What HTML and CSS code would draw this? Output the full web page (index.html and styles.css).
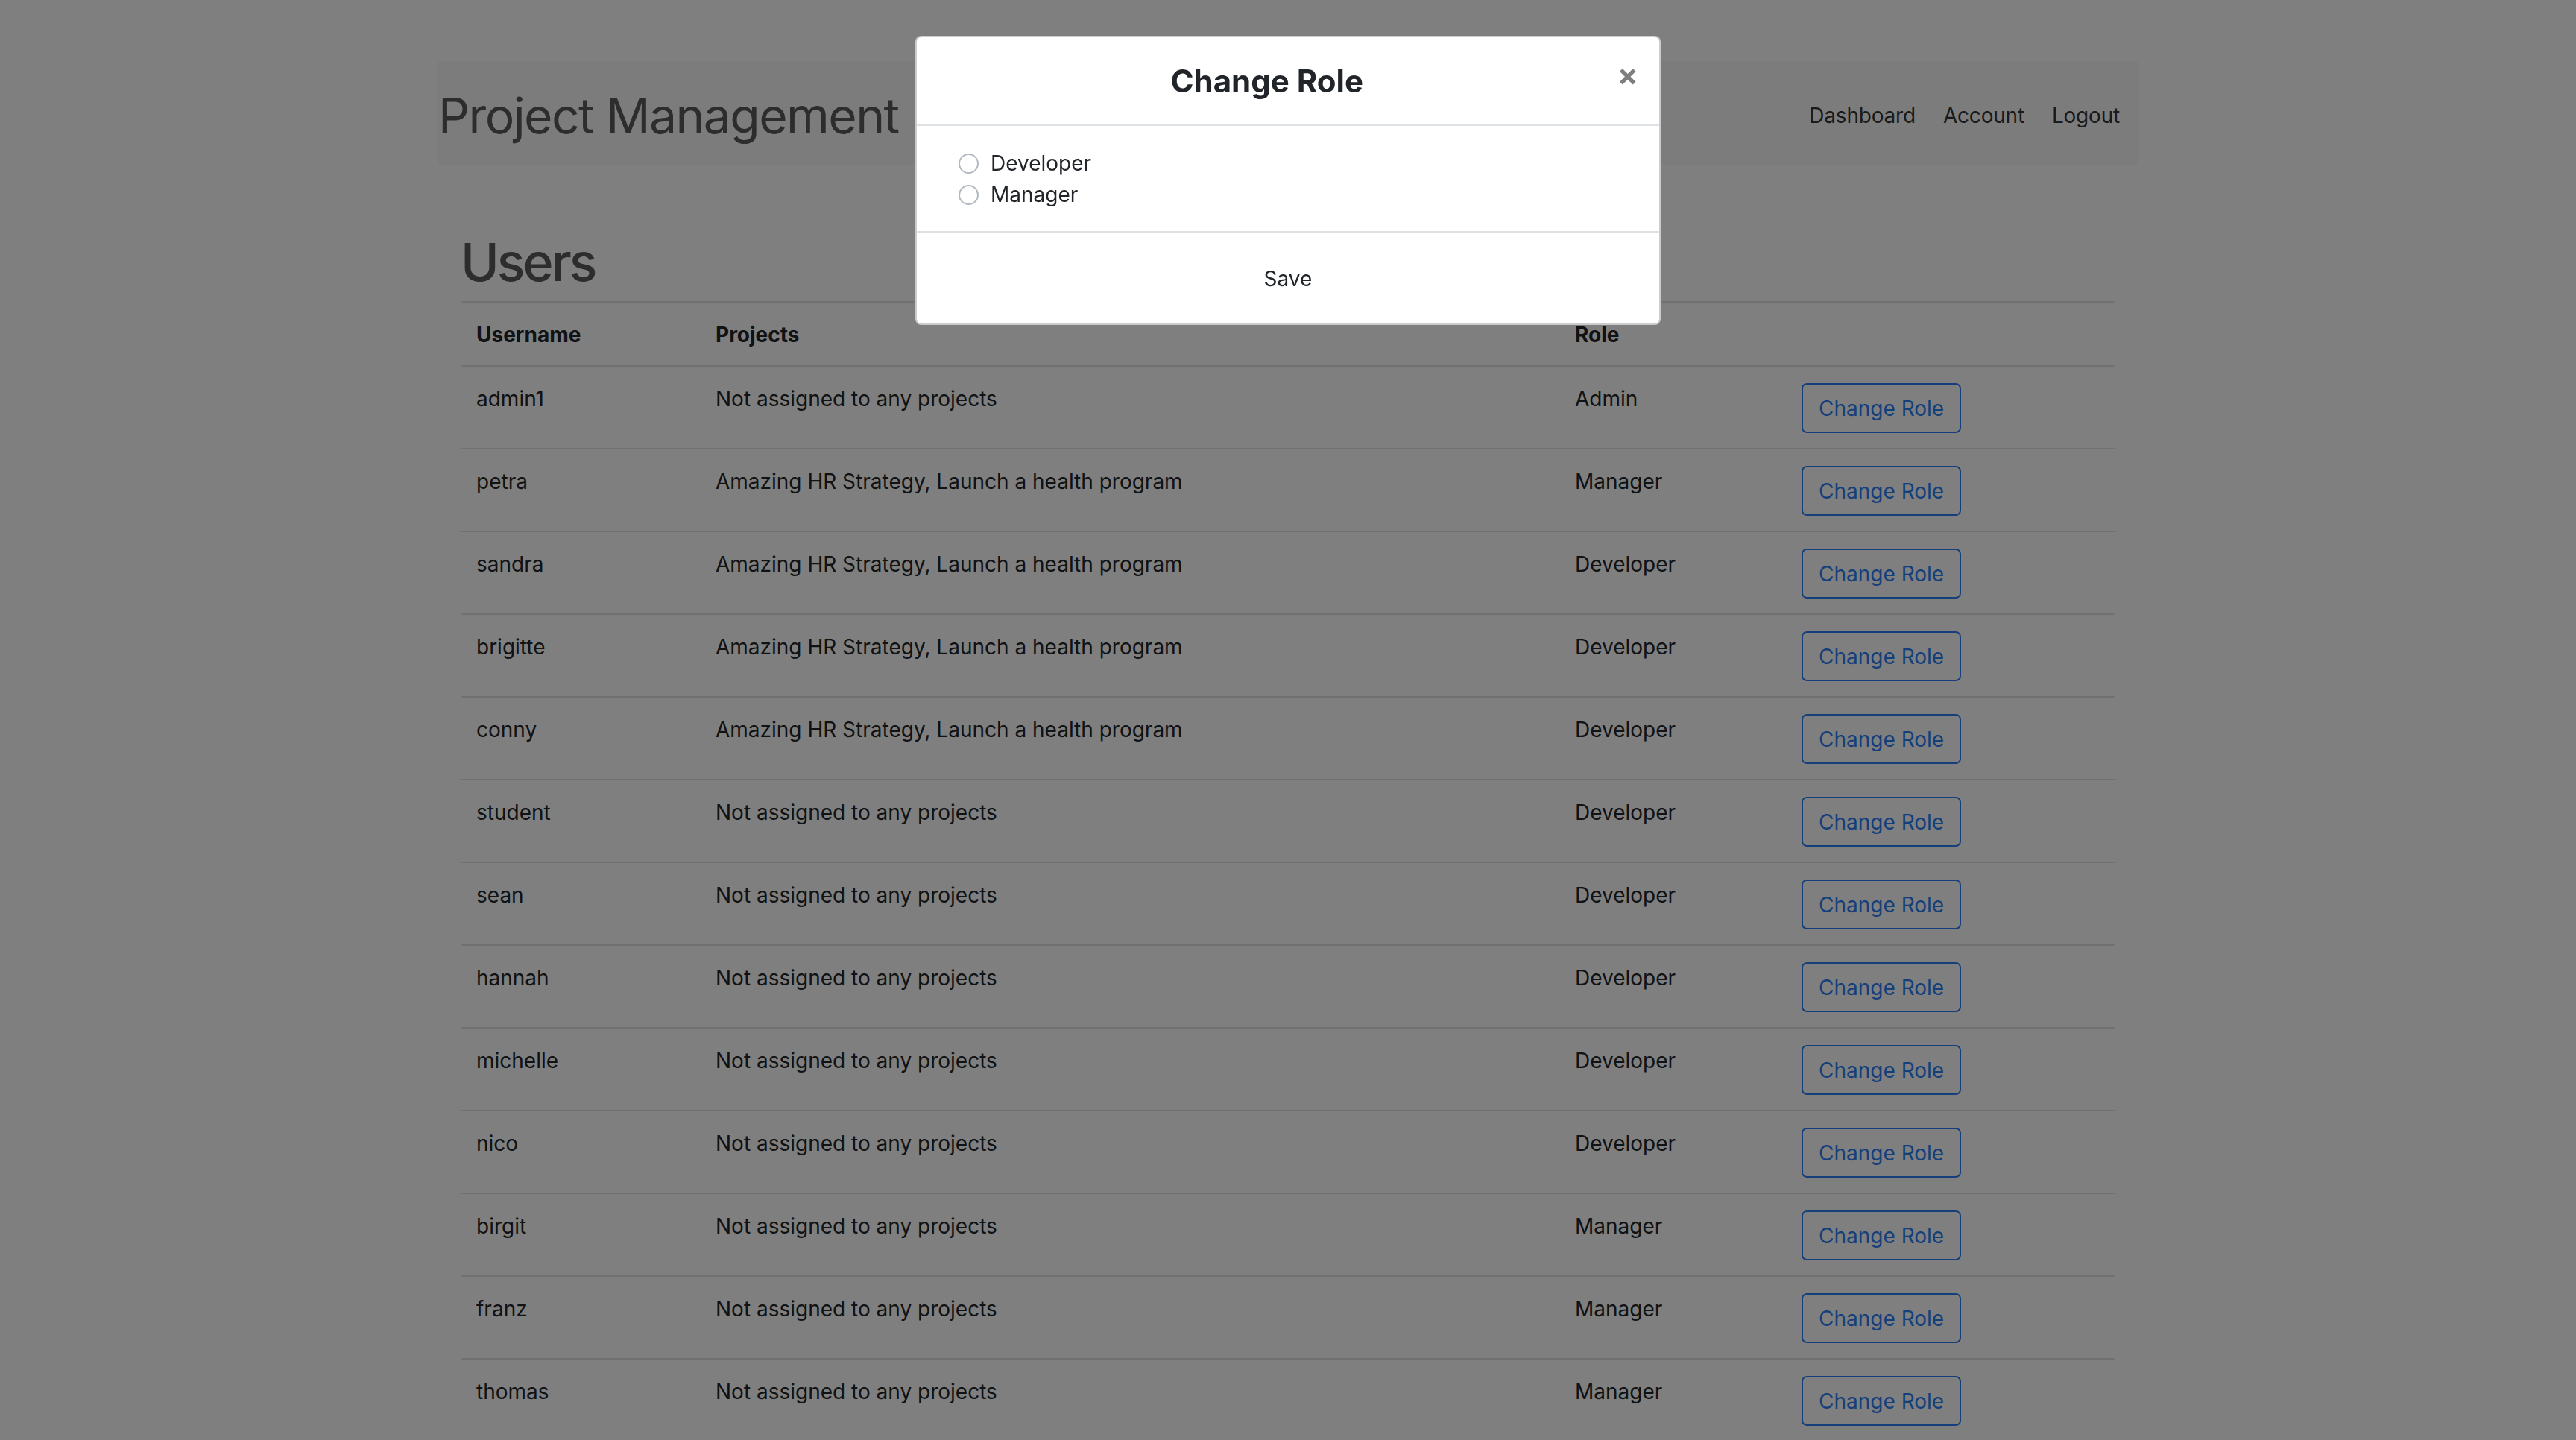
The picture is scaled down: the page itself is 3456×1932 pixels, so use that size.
FILE: index.html
```html
<!DOCTYPE html>
<html lang="en">
<head>
<meta charset="utf-8">
<title>Project Management - Users</title>
<link rel="stylesheet" href="styles.css">
</head>
<body>
<div class="page">
  <nav class="navbar">
    <a class="brand" href="#">Project Management</a>
    <ul class="nav">
      <li><a class="nav-link" href="#">Dashboard</a></li>
      <li><a class="nav-link" href="#">Account</a></li>
      <li><a class="nav-link" href="#">Logout</a></li>
    </ul>
  </nav>
  <main class="content">
    <h1 class="title">Users</h1>
    <table class="users">
      <colgroup>
        <col class="c-user"><col class="c-proj"><col class="c-role"><col class="c-act">
      </colgroup>
      <thead>
        <tr><th>Username</th><th>Projects</th><th>Role</th><th></th></tr>
      </thead>
      <tbody>
        <tr><td>admin1</td><td>Not assigned to any projects</td><td>Admin</td><td><button class="btn-outline">Change Role</button></td></tr>
        <tr><td>petra</td><td>Amazing HR Strategy, Launch a health program</td><td>Manager</td><td><button class="btn-outline">Change Role</button></td></tr>
        <tr><td>sandra</td><td>Amazing HR Strategy, Launch a health program</td><td>Developer</td><td><button class="btn-outline">Change Role</button></td></tr>
        <tr><td>brigitte</td><td>Amazing HR Strategy, Launch a health program</td><td>Developer</td><td><button class="btn-outline">Change Role</button></td></tr>
        <tr><td>conny</td><td>Amazing HR Strategy, Launch a health program</td><td>Developer</td><td><button class="btn-outline">Change Role</button></td></tr>
        <tr><td>student</td><td>Not assigned to any projects</td><td>Developer</td><td><button class="btn-outline">Change Role</button></td></tr>
        <tr><td>sean</td><td>Not assigned to any projects</td><td>Developer</td><td><button class="btn-outline">Change Role</button></td></tr>
        <tr><td>hannah</td><td>Not assigned to any projects</td><td>Developer</td><td><button class="btn-outline">Change Role</button></td></tr>
        <tr><td>michelle</td><td>Not assigned to any projects</td><td>Developer</td><td><button class="btn-outline">Change Role</button></td></tr>
        <tr><td>nico</td><td>Not assigned to any projects</td><td>Developer</td><td><button class="btn-outline">Change Role</button></td></tr>
        <tr><td>birgit</td><td>Not assigned to any projects</td><td>Manager</td><td><button class="btn-outline">Change Role</button></td></tr>
        <tr><td>franz</td><td>Not assigned to any projects</td><td>Manager</td><td><button class="btn-outline">Change Role</button></td></tr>
        <tr><td>thomas</td><td>Not assigned to any projects</td><td>Manager</td><td><button class="btn-outline">Change Role</button></td></tr>
      </tbody>
    </table>
  </main>
</div>

<div class="backdrop"></div>

<div class="modal">
  <div class="modal-dialog">
    <div class="modal-content">
      <div class="modal-header">
        <h4 class="modal-title">Change Role</h4>
        <button class="close" type="button">&times;</button>
      </div>
      <div class="modal-body">
        <label class="radio-row"><input class="radio" type="radio" name="role"><span>Developer</span></label>
        <label class="radio-row"><input class="radio" type="radio" name="role"><span>Manager</span></label>
      </div>
      <div class="modal-footer">
        <button class="btn-save" type="button">Save</button>
      </div>
    </div>
  </div>
</div>
</body>
</html>
```

FILE: styles.css
```css
html, body {
  height: 100%;
}

body {
  margin: 0;
  overflow: hidden;
  background: #ffffff;
  color: #212529;
  font-family: Inter, "Noto Sans", Roboto, sans-serif;
  font-size: 28px;
  line-height: 42px;
}

.page {
  width: 2280px;
  margin: 0 auto;
  padding-top: 82px;
}

/* ---------- navbar ---------- */
.navbar {
  display: flex;
  align-items: center;
  justify-content: space-between;
  height: 140px;
  box-sizing: border-box;
  padding: 31px 24px 25px 0;
  background: #f8f9fa;
}

.brand {
  font-size: 66px;
  line-height: 84px;
  color: #5a5a5a;
  text-decoration: none;
  letter-spacing: -1.6px;
}

.nav {
  display: flex;
  gap: 37px;
  margin: 0;
  padding: 0;
  list-style: none;
}

.nav-link {
  color: #343434;
  text-decoration: none;
  font-size: 28px;
  letter-spacing: -0.2px;
}

/* ---------- content ---------- */
.content {
  padding: 0 30px;
}

.title {
  margin: 88px 0 10px;
  font-size: 70px;
  line-height: 84px;
  font-weight: 500;
  color: #5a5a5a;
  letter-spacing: -3px;
}

.users {
  width: 100%;
  table-layout: fixed;
  border-collapse: collapse;
}

.c-user { width: 321px; }
.c-proj { width: 1153px; }
.c-role { width: 304px; }
.c-act  { width: 442px; }

.users th,
.users td {
  padding: 22px 21px 20px;
  text-align: left;
  vertical-align: top;
  border-top: 2px solid #dee2e6;
}

.users th {
  font-weight: 700;
  border-bottom: 2px solid #dee2e6;
}

.btn-outline {
  font-family: inherit;
  font-size: 28px;
  line-height: 42px;
  padding: 10.5px 21px;
  border: 2px solid #2a7ef5;
  border-radius: 7px;
  background: transparent;
  color: #2a7ef5;
  cursor: pointer;
}

/* ---------- modal ---------- */
.backdrop {
  position: fixed;
  inset: 0;
  background: rgba(0, 0, 0, 0.5);
}

.modal {
  position: fixed;
  inset: 0;
}

.modal-dialog {
  width: 1000px;
  margin: 48px auto 0;
}

.modal-content {
  background: #ffffff;
  border: 2px solid rgba(0, 0, 0, 0.2);
  border-radius: 8px;
  overflow: hidden;
}

.modal-header {
  display: flex;
  align-items: flex-start;
  padding: 29px 28px 28px;
  border-bottom: 2px solid #dee2e6;
}

.modal-title {
  flex: 1;
  margin: 0;
  text-align: center;
  font-size: 42px;
  line-height: 60px;
  font-weight: 700;
  color: #212529;
}

.close {
  margin: -29px -28px -28px auto;
  padding: 29px 28px 28px;
  border: 0;
  background: transparent;
  font-family: inherit;
  font-size: 42px;
  line-height: 42px;
  font-weight: 700;
  color: #000000;
  opacity: 0.5;
  cursor: pointer;
}

.modal-body {
  display: flex;
  flex-direction: column;
  padding: 29px 28px 28px 56px;
}

.radio-row {
  display: flex;
  align-items: center;
  gap: 16px;
  line-height: 42px;
}

.radio {
  appearance: none;
  -webkit-appearance: none;
  width: 27px;
  height: 27px;
  margin: 0;
  box-sizing: border-box;
  border: 2px solid #b3b9c2;
  border-radius: 50%;
  background: #ffffff;
}

.modal-footer {
  display: flex;
  justify-content: center;
  padding: 21px 21px 20px;
  border-top: 2px solid #dee2e6;
}

.btn-save {
  margin: 7px;
  padding: 10.5px 21px;
  border: 2px solid transparent;
  background: transparent;
  font-family: inherit;
  font-size: 28px;
  line-height: 42px;
  color: #212529;
  cursor: pointer;
}
```
